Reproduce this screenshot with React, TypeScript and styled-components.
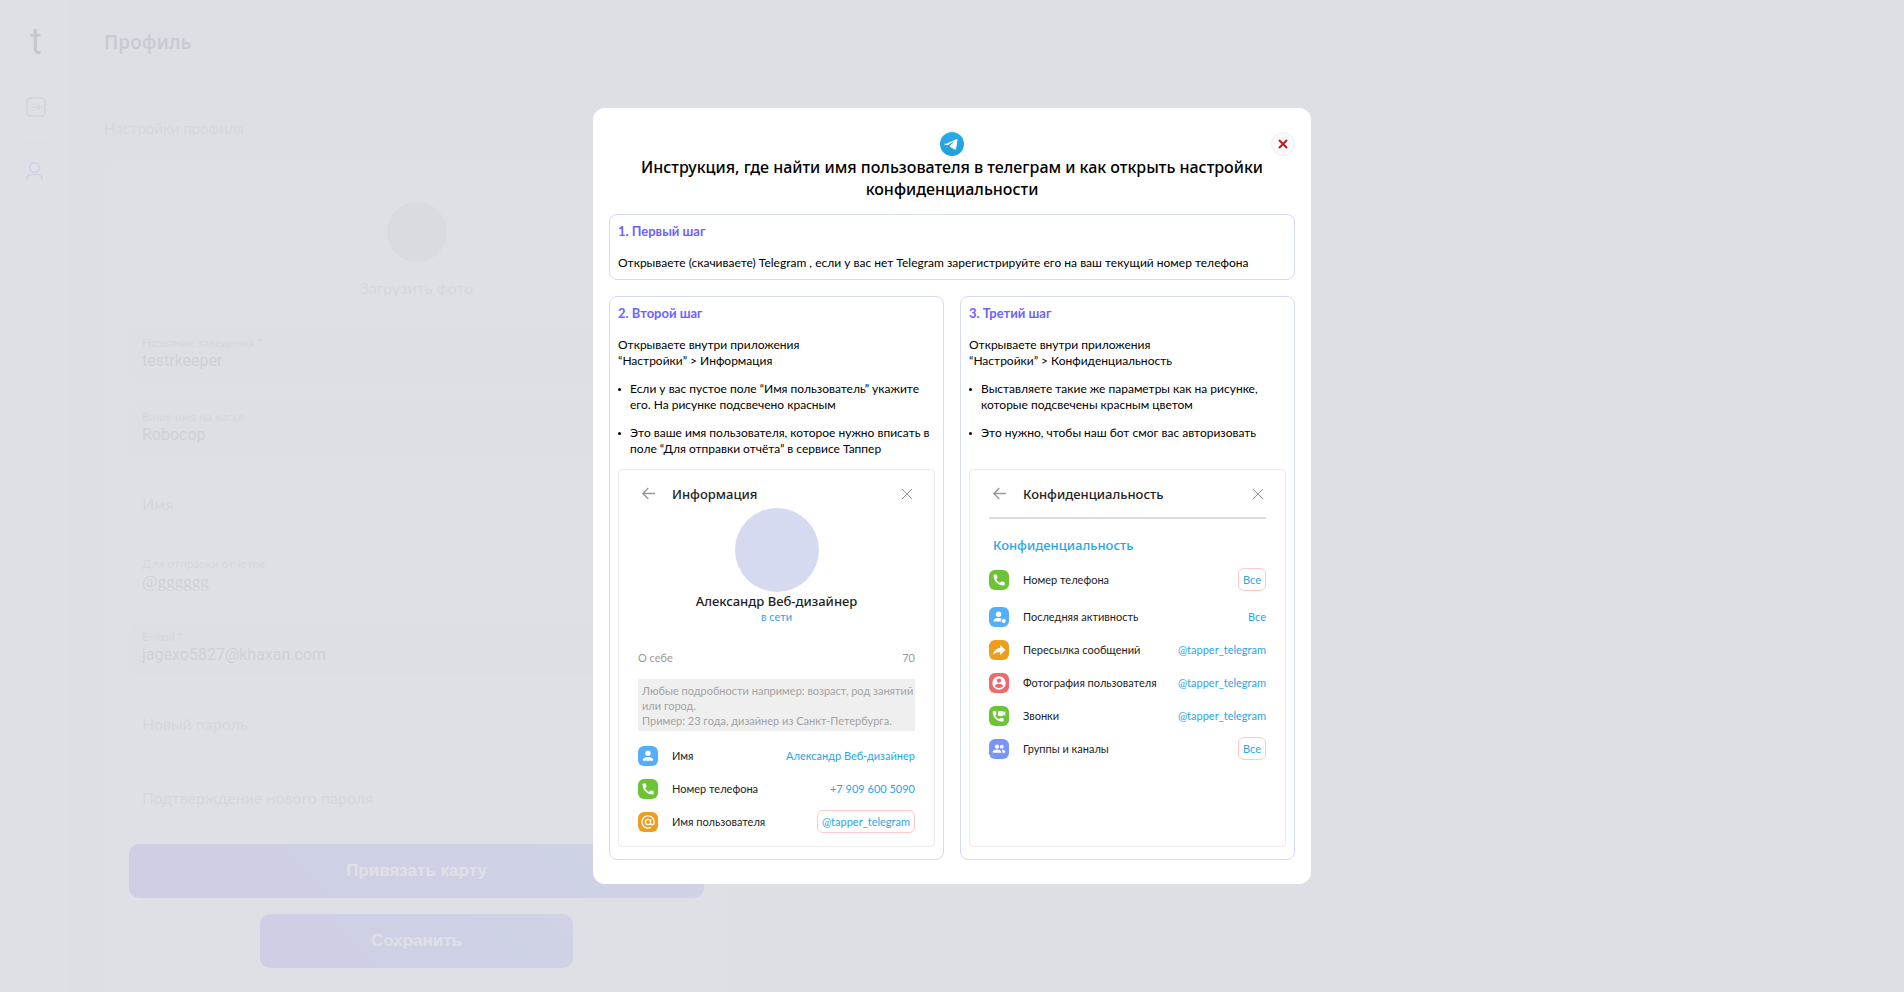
import React from "react";
import styled, { createGlobalStyle, css } from "styled-components";

const textFont = `Lato, "Open Sans", sans-serif`;
const headFont = `"Noto Sans", "Open Sans", sans-serif`;
const inputFont = `Roboto, Inter, sans-serif`;

const GlobalStyle = createGlobalStyle`
  * { box-sizing: border-box; }
  body { margin: 0; overflow: hidden; background: #eff0f6; font-family: ${textFont}; color: #000; }
  h1, h2, h3, h4, p, ul, dl, dd, dt { margin: 0; padding: 0; }
  button, input { font: inherit; color: inherit; }
`;

/* ---------- profile page ---------- */

const Shell = styled.div`
  display: flex;
  height: 100vh;
  overflow: hidden;
`;

const Sidebar = styled.nav`
  flex: none;
  width: 71px;
  background: #fff;
  border-right: 1px solid #f0f1f7;
  display: flex;
  flex-direction: column;
  align-items: center;
  padding: 20px 0 0 2px;
`;

const Logo = styled.a`
  font: 400 36px/44px Roboto, sans-serif;
  color: #000;
  text-decoration: none;
`;

const NavLink = styled.a<{ $active?: boolean }>`
  display: flex;
  width: 20px;
  height: 20px;
  margin-top: ${(p) => (p.$active ? 18 : 33)}px;
  color: ${(p) => (p.$active ? "#6c63ff" : "#8e94a2")};
`;

const NavDivider = styled.hr`
  width: 28px;
  margin: 25px 0 0;
  border: 0;
  border-top: 1px solid #dfe1ea;
`;

const Main = styled.main`
  flex: 1;
  padding: 28px 33px 0;
`;

const PageTitle = styled.h1`
  font: 600 19px/28px ${headFont};
  color: #1a2c58;
`;

const SectionTitle = styled.h2`
  margin-top: 60px;
  font-size: 15px;
  font-weight: 400;
  line-height: 24px;
  color: #99a0b0;
`;

const Card = styled.form`
  max-width: 625px;
  min-height: 900px;
  margin-top: 21px;
  padding: 40px 24px;
  border: 1px solid #eeeff5;
  border-radius: 10px;
  background: #fff;
  display: flex;
  flex-direction: column;
`;

const PhotoUpload = styled.label`
  display: flex;
  flex-direction: column;
  align-items: center;
  gap: 14px;
  margin-bottom: 28px;
  font-size: 16px;
  line-height: 24px;
  color: #99a0b0;

  input { display: none; }
`;

const Avatar = styled.span`
  width: 60px;
  height: 60px;
  border-radius: 50%;
  background: #c8c9ca;
`;

const Field = styled.div<{ $filled?: boolean; $empty?: boolean; $compact?: boolean }>`
  display: flex;
  flex-direction: column;
  justify-content: center;
  height: ${(p) => (p.$compact ? 52 : 54)}px;
  margin-bottom: 20px;
  padding: ${(p) => (p.$empty ? "4px 12px 0" : "0 12px 4px")};
  border: 1px solid #eeeff4;
  border-radius: 10px;
  background: ${(p) => (p.$filled ? "#eceef2" : "#fff")};

  label {
    font-size: 12px;
    line-height: 16px;
    color: #99a0b0;
  }

  em { font-style: normal; color: #e05252; }
`;

const FieldInput = styled.input<{ $serif?: boolean }>`
  width: 100%;
  height: 20px;
  padding: 0;
  border: 0;
  outline: 0;
  background: none;
  font: ${(p) => (p.$serif ? `17px/20px "Liberation Serif", serif` : `16px/20px ${inputFont}`)};
  color: #5a6270;

  &::placeholder {
    font-family: ${textFont};
    color: #99a0b0;
    opacity: 1;
  }
`;

const PrimaryButton = styled.button<{ $narrow?: boolean }>`
  align-self: center;
  width: ${(p) => (p.$narrow ? "313px" : "100%")};
  height: 54px;
  margin-bottom: 16px;
  border: 0;
  border-radius: 10px;
  background: linear-gradient(45deg, #5548ff, #5a7bff);
  font: 700 17px/20px "Liberation Sans", Arial, sans-serif;
  color: #fff;
`;

/* ---------- dialog ---------- */

const Backdrop = styled.div`
  position: fixed;
  inset: 0;
  display: flex;
  align-items: center;
  justify-content: center;
  background: rgba(219, 221, 226, 0.9);
`;

const Dialog = styled.section`
  width: 718px;
  max-width: 100%;
  padding: 24px 16px;
  border-radius: 12px;
  background: #fff;
`;

const DialogTop = styled.header`
  display: grid;
  grid-template-columns: 24px 1fr 24px;
  justify-items: center;
`;

const CloseButton = styled.button`
  display: flex;
  align-items: center;
  justify-content: center;
  grid-column: 3;
  width: 24px;
  height: 24px;
  padding: 0;
  border: 1px solid #efefef;
  border-radius: 50%;
  background: #fafafa;
  color: #c4161c;
`;

const TelegramMark = styled.svg`
  grid-column: 2;
  width: 24px;
  height: 24px;
`;

const DialogTitle = styled.h2`
  margin-bottom: 14px;
  padding: 0 24px;
  font: 500 16px/22px ${headFont};
  text-align: center;
`;

const Steps = styled.div`
  display: grid;
  grid-template-columns: 1fr 1fr;
  gap: 16px;
`;

const Step = styled.article<{ $wide?: boolean }>`
  display: flex;
  flex-direction: column;
  padding: 8px 8px ${(p) => (p.$wide ? 8 : 12)}px;
  border: 1px solid #d5daf1;
  border-radius: 8px;
  font-size: 12px;
  line-height: 16px;
  ${(p) => p.$wide && css`grid-column: 1 / -1;`}
`;

const StepTitle = styled.h3`
  margin-bottom: 16px;
  font-size: 13px;
  font-weight: 700;
  line-height: 16px;
  color: #6c63ff;
`;

const Bullets = styled.ul`
  display: flex;
  flex-direction: column;
  gap: 12px;
  list-style: none;

  ul& { padding: 12px 0; }
`;

const Bullet = styled.li`
  display: flex;
  gap: 9px;

  &::before {
    content: "";
    flex: none;
    width: 3px;
    height: 3px;
    margin-top: 7px;
    border-radius: 50%;
    background: #000;
  }
`;

/* ---------- Telegram settings preview ---------- */

const Preview = styled.div`
  min-height: 378px;
  margin-top: auto;
  padding: 10px 19px 7px;
  border: 1px solid #ebebec;
  border-radius: 4px;
  font-size: 11px;
  line-height: 15px;
  color: #222;
`;

const PreviewHead = styled.div`
  display: grid;
  grid-template-columns: 20px 1fr 14px;
  column-gap: 14px;
  align-items: center;
  height: 28px;

  svg { color: #999; }
`;

const PreviewTitle = styled.h4`
  font: 500 13px/18px ${headFont};
`;

const Person = styled.div`
  display: flex;
  flex-direction: column;
  align-items: center;
`;

const PersonPhoto = styled.span`
  width: 84px;
  height: 84px;
  border-radius: 50%;
  background: #d5daf0;
`;

const Online = styled.p`
  line-height: 14px;
  color: #2ba5e6;
`;

const About = styled.div`
  display: flex;
  justify-content: space-between;
  margin: 26px 0 13px;
  line-height: 16px;
  color: #999;
`;

const AboutHint = styled.p`
  margin-bottom: 8px;
  padding-top: 4px;
  padding-bottom: 3px;
  padding-left: 4px;
  background: #efefef;
  color: #a3a3a3;
`;

const PreviewRule = styled.hr`
  margin: 9px 0 17px;
  border: 0;
  border-top: 2px solid #dcdcdd;
`;

const GroupTitle = styled(PreviewTitle)`
  margin: 0 0 5px 4px;
  color: #2ba5e6;
`;

const Row = styled.div<{ $tall?: boolean }>`
  display: grid;
  grid-template-columns: 20px 1fr auto;
  column-gap: 14px;
  align-items: center;
  height: ${(p) => (p.$tall ? 41 : 33)}px;
`;

const RowIcon = styled.svg<{ $color: string }>`
  width: 20px;
  height: 20px;
  border-radius: 6px;
  background: ${(p) => p.$color};
  fill: #fff;
`;

const RowValue = styled.dd<{ $marked?: boolean }>`
  color: #2ba5e6;
  ${(p) =>
    p.$marked &&
    css`
      padding: 3px 4px;
      border: 1px solid #ffc9c9;
      border-radius: 6px;
    `}
`;

const icons = {
  person: (
    <>
      <circle cx="10" cy="7.3" r="2.7" />
      <path d="M5 14.8v-1.2c0-1.7 3.2-2.6 5-2.6s5 .9 5 2.6v1.2z" />
    </>
  ),
  activity: (
    <>
      <circle cx="9.6" cy="7.2" r="2.7" />
      <path d="M4.6 14.6v-1.2c0-1.7 3.2-2.5 5-2.5 1.2 0 2.3.3 3.3.8a2.8 2.8 0 0 0-.7 2.9z" />
      <circle cx="14.7" cy="14" r="2" />
    </>
  ),
  phone: (
    <path d="M5.3 4.4h2c.4 0 .6.2.7.6.1.8.3 1.6.5 2.3.1.3 0 .6-.2.8L7.2 9.3c.9 1.7 1.9 2.7 3.6 3.6l1.2-1.2c.2-.2.5-.3.8-.2.7.3 1.5.4 2.3.5.4.1.6.3.6.7v2c0 .4-.3.8-.8.8C9 15.5 4.5 11 4.5 5.2c0-.5.4-.8.8-.8z" />
  ),
  at: (
    <path
      d="M12.6 7.2v3.7c0 1.2.6 1.9 1.6 1.9 1.2 0 1.9-1 1.9-2.8A6.1 6.1 0 1 0 12.8 15.4M12.6 10a2.6 2.6 0 1 1-5.2 0 2.6 2.6 0 0 1 5.2 0z"
      fill="none"
      stroke="#fff"
      strokeWidth="1.3"
    />
  ),
  forward: <path d="M11.2 5l5.3 5-5.3 5v-3c-3.5 0-5.5.9-7.2 3 .5-3.5 2.6-6.4 7.2-7z" />,
  photo: (
    <path
      fillRule="evenodd"
      d="M10 3.3a6.7 6.7 0 1 0 0 13.4 6.7 6.7 0 0 0 0-13.4zM10 5.4a2.2 2.2 0 1 1 0 4.4 2.2 2.2 0 0 1 0-4.4zM5.8 13c.2-1.4 2.7-2.2 4.2-2.2s4 .8 4.2 2.2c-1 1.3-2.5 2-4.2 2s-3.2-.7-4.2-2z"
    />
  ),
  calls: (
    <>
      <path d="M4.4 5h2c.4 0 .6.2.7.6.1.8.2 1.5.5 2.2.1.3 0 .6-.2.8L6.300 9.700c.8 1.700 1.900 2.700 3.500 3.500l1.200-1.200c.2-.2.5-.3.8-.2.7.3 1.400.4 2.200.5.4.1.6.3.6.7v1.900c0 .4-.3.7-.8.7C8.200 15.600 3.700 11.500 3.700 5.700c0-.4.3-.7.7-.7z" />
      <path d="M9.600 5h4.200c.3 0 .5.2.5.5v1.200L16.300 5v5l-2-1.700v1.200c0 .3-.2.5-.5.5H9.600a.5.5 0 0 1-.5-.5v-4c0-.3.2-.5.5-.5z" />
    </>
  ),
  group: (
    <>
      <circle cx="8" cy="7.7" r="2.1" />
      <circle cx="12.8" cy="7.7" r="1.9" />
      <path d="M3.7 13.8v-1.2c0-1.5 2.8-2.2 4.3-2.2s4.2.7 4.2 2.2v1.2zM13.3 13.8h3v-1.2c0-1.2-1.900-2-3.400-2.200.3.6.4 1.300.4 2z" />
    </>
  ),
};

type RowData = { icon: keyof typeof icons; color: string; name: string; value: string; marked?: boolean };

const infoRows: RowData[] = [
  { icon: "person", color: "#54aff8", name: "Имя", value: "Александр Веб-дизайнер" },
  { icon: "phone", color: "#6bc433", name: "Номер телефона", value: "+7 909 600 5090" },
  { icon: "at", color: "#ee9e1f", name: "Имя пользователя", value: "@tapper_telegram", marked: true },
];

const privacyRows: RowData[] = [
  { icon: "phone", color: "#6bc433", name: "Номер телефона", value: "Все", marked: true },
  { icon: "activity", color: "#54aff8", name: "Последняя активность", value: "Все" },
  { icon: "forward", color: "#ee9e1f", name: "Пересылка сообщений", value: "@tapper_telegram" },
  { icon: "photo", color: "#f0696a", name: "Фотография пользователя", value: "@tapper_telegram" },
  { icon: "calls", color: "#6bc433", name: "Звонки", value: "@tapper_telegram" },
  { icon: "group", color: "#7795fb", name: "Группы и каналы", value: "Все", marked: true },
];

function SettingRows({ rows, tallFirst }: { rows: RowData[]; tallFirst?: boolean }) {
  return (
    <dl>
      {rows.map((r, i) => (
        <Row key={r.name} $tall={tallFirst && i === 0}>
          <RowIcon $color={r.color} viewBox="0 0 20 20" aria-hidden="true">
            {icons[r.icon]}
          </RowIcon>
          <dt>{r.name}</dt>
          <RowValue $marked={r.marked}>{r.value}</RowValue>
        </Row>
      ))}
    </dl>
  );
}

function PreviewHeader({ title }: { title: string }) {
  return (
    <PreviewHead>
      <svg width="20" height="14" viewBox="0 0 20 14" fill="none" stroke="currentColor" strokeWidth="1.4">
        <path d="M17 6.500H4.800M10.300 1L4.800 6.500l5.500 5.500" />
      </svg>
      <PreviewTitle>{title}</PreviewTitle>
      <svg width="12" height="12" viewBox="0 0 12 12" stroke="currentColor" strokeWidth="1">
        <path d="M1 1l10 10M11 1L1 11" />
      </svg>
    </PreviewHead>
  );
}

type FieldProps = {
  id: string;
  label: string;
  value?: string;
  required?: boolean;
  filled?: boolean;
  serif?: boolean;
  password?: boolean;
};

function ProfileField({ id, label, value, required, filled, serif, password }: FieldProps) {
  return (
    <Field $filled={filled} $empty={!value} $compact={serif}>
      {value && (
        <label htmlFor={id}>
          {label}
          {required && <em> *</em>}
        </label>
      )}
      <FieldInput
        id={id}
        $serif={serif}
        type={password ? "password" : "text"}
        defaultValue={value}
        placeholder={value ? undefined : label}
        aria-label={value ? undefined : label}
        readOnly={filled}
      />
    </Field>
  );
}

export default function App() {
  return (
    <>
      <GlobalStyle />
      <Shell>
        <Sidebar>
          <Logo href="#">t</Logo>
          <NavLink href="#orders" aria-label="Чаевые">
            <svg width="20" height="20" viewBox="0 0 20 20" fill="none" stroke="currentColor" strokeWidth="1.7">
              <rect x="1" y="1" width="18" height="18" rx="4" />
              <path d="M5 10h9M11.500 7l3 3-3 3M5.500 7h1.500M8 7h1.500M5.500 13h1.500M8 13h1.500" />
            </svg>
          </NavLink>
          <NavDivider />
          <NavLink href="#profile" aria-label="Профиль" $active>
            <svg width="20" height="20" viewBox="0 0 20 20" fill="none" stroke="currentColor" strokeWidth="1.6">
              <circle cx="8.5" cy="6.5" r="4.7" />
              <path d="M1 19v-.5c0-3 2-5 5-5h5c3 0 5 2 5 5v.5" />
            </svg>
          </NavLink>
        </Sidebar>
        <Main>
          <PageTitle>Профиль</PageTitle>
          <SectionTitle>Настройки профиля</SectionTitle>
          <Card>
            <PhotoUpload>
              <Avatar />
              Загрузить фото
              <input type="file" />
            </PhotoUpload>
            <ProfileField id="place" label="Название заведения" value="testrkeeper" required filled />
            <ProfileField id="cashier" label="Ваше имя на кассе" value="Robocop" filled />
            <ProfileField id="name" label="Имя" />
            <ProfileField id="reports" label="Для отправки отчетов" value="@gggggg" serif />
            <ProfileField id="email" label="E-mail" value="jagexo5827@khaxan.com" required filled />
            <ProfileField id="password" label="Новый пароль" password />
            <ProfileField id="repeat" label="Подтверждение нового пароля" password />
            <PrimaryButton type="button">Привязать карту</PrimaryButton>
            <PrimaryButton type="submit" $narrow>
              Сохранить
            </PrimaryButton>
          </Card>
        </Main>
      </Shell>

      <Backdrop>
        <Dialog role="dialog" aria-modal="true" aria-labelledby="dialog-title">
          <DialogTop>
            <TelegramMark viewBox="0 0 24 24" aria-hidden="true">
              <defs>
                <linearGradient id="tg" x1="0" y1="0" x2="0" y2="1">
                  <stop offset="0" stopColor="#2aabee" />
                  <stop offset="1" stopColor="#229ed9" />
                </linearGradient>
              </defs>
              <circle cx="12" cy="12" r="12" fill="url(#tg)" />
              <path
                fill="#fff"
                d="M5.400 11.900c3.500-1.500 5.800-2.500 7-3 3.300-1.400 4-1.600 4.500-1.600.1 0 .3 0 .5.1.1.1.1.3.1.5-.2 1.900-1 6.500-1.400 8.600-.2.9-.5 1.200-.8 1.200-.7.1-1.300-.5-2-.9-1.100-.7-1.700-1.200-2.800-1.900-1.200-.8-.4-1.300.3-2 .2-.2 3.300-3 3.300-3.300 0 0 0-.2-.1-.2s-.2-.1-.3 0c-.1 0-1.800 1.100-5.100 3.300-.5.3-.9.5-1.300.5-.4 0-1.200-.2-1.800-.4-.8-.2-1.300-.4-1.300-.7 0-.1.3-.3.9-.5z"
              />
            </TelegramMark>
            <CloseButton type="button" aria-label="Закрыть">
              <svg width="10" height="10" viewBox="0 0 10 10" stroke="currentColor" strokeWidth="2">
                <path d="M1 1l8 8M9 1L1 9" />
              </svg>
            </CloseButton>
          </DialogTop>
          <DialogTitle id="dialog-title">
            Инструкция, где найти имя пользователя в телеграм и как открыть настройки конфиденциальности
          </DialogTitle>
          <Steps>
            <Step $wide>
              <StepTitle>1. Первый шаг</StepTitle>
              <p>
                Открываете (скачиваете) Telegram , если у вас нет Telegram зарегистрируйте его на ваш текущий номер
                телефона
              </p>
            </Step>
            <Step>
              <StepTitle>2. Второй шаг</StepTitle>
              <p>
                Открываете внутри приложения
                <br />
                “Настройки” &gt; Информация
              </p>
              <Bullets>
                <Bullet>Если у вас пустое поле “Имя пользователь” укажите его. На рисунке подсвечено красным</Bullet>
                <Bullet>
                  Это ваше имя пользователя, которое нужно вписать в поле “Для отправки отчёта” в сервисе Таппер
                </Bullet>
              </Bullets>
              <Preview>
                <PreviewHeader title="Информация" />
                <Person>
                  <PersonPhoto />
                  <PreviewTitle>Александр Веб-дизайнер</PreviewTitle>
                  <Online>в сети</Online>
                </Person>
                <About>
                  <span>О себе</span>
                  <span>70</span>
                </About>
                <AboutHint>
                  Любые подробности например: возраст, род занятий или город.
                  <br />
                  Пример: 23 года, дизайнер из Санкт-Петербурга.
                </AboutHint>
                <SettingRows rows={infoRows} />
              </Preview>
            </Step>
            <Step>
              <StepTitle>3. Третий шаг</StepTitle>
              <p>
                Открываете внутри приложения
                <br />
                “Настройки” &gt; Конфиденциальность
              </p>
              <Bullets>
                <Bullet>Выставляете такие же параметры как на рисунке, которые подсвечены красным цветом</Bullet>
                <Bullet>Это нужно, чтобы наш бот смог вас авторизовать</Bullet>
              </Bullets>
              <Preview>
                <PreviewHeader title="Конфиденциальность" />
                <PreviewRule />
                <GroupTitle>Конфиденциальность</GroupTitle>
                <SettingRows rows={privacyRows} tallFirst />
              </Preview>
            </Step>
          </Steps>
        </Dialog>
      </Backdrop>
    </>
  );
}
